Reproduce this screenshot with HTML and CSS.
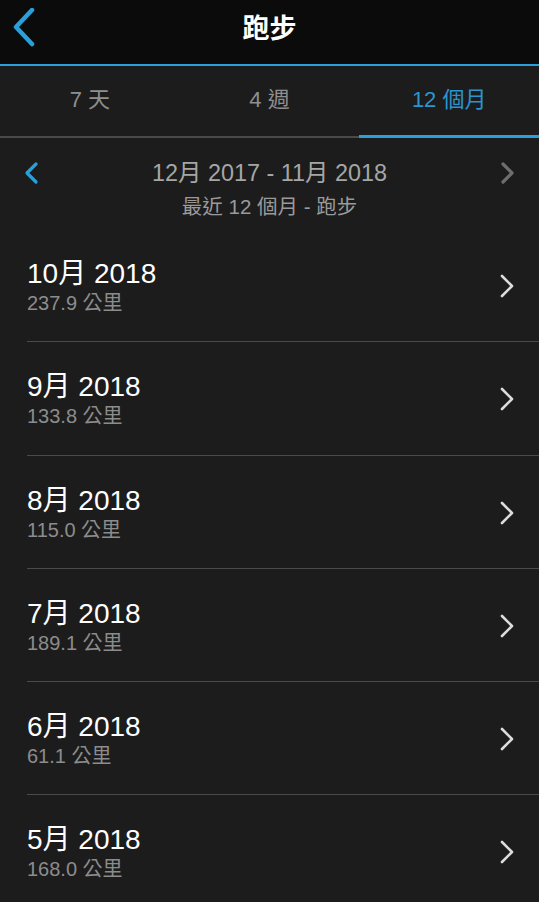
FILE: index.html
```html
<!DOCTYPE html>
<html lang="zh-Hant">
<head>
    <meta charset="UTF-8">
    <meta name="viewport" content="width=device-width, initial-scale=1.0">
    <title>跑步</title>
    <link rel="stylesheet" href="styles.css">
</head>
<body>
    <div class="app">
        <header class="topbar">
            <a class="back" href="#">
                <svg width="24" height="40" viewBox="0 0 24 40"><polyline points="20,2 4,19 20,36" fill="none" stroke="#2a9fd8" stroke-width="4.5" stroke-linecap="round" stroke-linejoin="round"/></svg>
            </a>
            <h1>跑步</h1>
        </header>

        <nav class="tabs">
            <div class="tab">7 天</div>
            <div class="tab">4 週</div>
            <div class="tab active">12 個月</div>
        </nav>

        <section class="range">
            <div class="range-line">
                <span class="arrow">
                    <svg width="16" height="24" viewBox="0 0 16 24"><polyline points="12,3 3,12 12,21" fill="none" stroke="#2a9fd8" stroke-width="3.2" stroke-linecap="round" stroke-linejoin="round"/></svg>
                </span>
                <span class="range-title">12月 2017 - 11月 2018</span>
                <span class="arrow">
                    <svg width="16" height="24" viewBox="0 0 16 24"><polyline points="4,3 13,12 4,21" fill="none" stroke="#6e6e6e" stroke-width="3.2" stroke-linecap="round" stroke-linejoin="round"/></svg>
                </span>
            </div>
            <div class="range-sub">最近 12 個月 - 跑步</div>
        </section>

        <ul class="months">
            <li class="month">
                <div>
                    <div class="month-name">10月 2018</div>
                    <div class="month-dist">237.9 公里</div>
                </div>
                <svg class="chev" width="16" height="24" viewBox="0 0 16 24"><polyline points="4,2 14,12 4,22" fill="none" stroke="#dcdcdc" stroke-width="2.6" stroke-linecap="round" stroke-linejoin="round"/></svg>
            </li>
            <li class="month">
                <div>
                    <div class="month-name">9月 2018</div>
                    <div class="month-dist">133.8 公里</div>
                </div>
                <svg class="chev" width="16" height="24" viewBox="0 0 16 24"><polyline points="4,2 14,12 4,22" fill="none" stroke="#dcdcdc" stroke-width="2.6" stroke-linecap="round" stroke-linejoin="round"/></svg>
            </li>
            <li class="month">
                <div>
                    <div class="month-name">8月 2018</div>
                    <div class="month-dist">115.0 公里</div>
                </div>
                <svg class="chev" width="16" height="24" viewBox="0 0 16 24"><polyline points="4,2 14,12 4,22" fill="none" stroke="#dcdcdc" stroke-width="2.6" stroke-linecap="round" stroke-linejoin="round"/></svg>
            </li>
            <li class="month">
                <div>
                    <div class="month-name">7月 2018</div>
                    <div class="month-dist">189.1 公里</div>
                </div>
                <svg class="chev" width="16" height="24" viewBox="0 0 16 24"><polyline points="4,2 14,12 4,22" fill="none" stroke="#dcdcdc" stroke-width="2.6" stroke-linecap="round" stroke-linejoin="round"/></svg>
            </li>
            <li class="month">
                <div>
                    <div class="month-name">6月 2018</div>
                    <div class="month-dist">61.1 公里</div>
                </div>
                <svg class="chev" width="16" height="24" viewBox="0 0 16 24"><polyline points="4,2 14,12 4,22" fill="none" stroke="#dcdcdc" stroke-width="2.6" stroke-linecap="round" stroke-linejoin="round"/></svg>
            </li>
            <li class="month">
                <div>
                    <div class="month-name">5月 2018</div>
                    <div class="month-dist">168.0 公里</div>
                </div>
                <svg class="chev" width="16" height="24" viewBox="0 0 16 24"><polyline points="4,2 14,12 4,22" fill="none" stroke="#dcdcdc" stroke-width="2.6" stroke-linecap="round" stroke-linejoin="round"/></svg>
            </li>
        </ul>
    </div>
</body>
</html>
```

FILE: styles.css
```css
body {
    margin: 0;
    font-family: "Liberation Sans", "Noto Sans CJK TC", sans-serif;
    background-color: #1c1c1c;
    color: #fff;
    overflow: hidden;
}
.app {
    width: 539px;
    height: 902px;
    overflow: hidden;
}
.topbar {
    height: 64px;
    background-color: #0b0b0b;
    border-bottom: 2px solid #2a9fd8;
    display: flex;
    align-items: center;
    justify-content: center;
    position: relative;
}
.topbar h1 {
    margin: 0;
    font-size: 27px;
    font-weight: bold;
    line-height: 34px;
    margin-top: -6px;
}
.back {
    position: absolute;
    left: 12px;
    top: 8px;
    display: block;
    line-height: 0;
}
.tabs {
    display: flex;
    height: 72px;
    box-shadow: inset 0 -2px 0 #4a4a4a;
}
.tab {
    flex: 1;
    text-align: center;
    font-size: 22px;
    line-height: 30px;
    padding-top: 19px;
    color: #8f8f8f;
}
.tab.active {
    color: #2a95d0;
    box-shadow: inset 0 -3px 0 #2a9fd8;
}
.range {
    padding: 20px 0 9px;
}
.range-line {
    display: flex;
    align-items: center;
    justify-content: space-between;
    padding: 0 24px;
    height: 30px;
}
.arrow {
    line-height: 0;
}
.range-title {
    font-size: 23.4px;
    line-height: 30px;
    color: #a6a6a6;
}
.range-sub {
    text-align: center;
    margin-top: 6px;
    font-size: 20.5px;
    line-height: 26px;
    color: #9a9a9a;
}
.months {
    list-style: none;
    margin: 0;
    padding: 0;
}
.month {
    margin-left: 27px;
    padding: 28px 25px 26.3px 0;
    display: flex;
    align-items: center;
    justify-content: space-between;
    border-bottom: 1px solid #4a4a4a;
}
.month-name {
    font-size: 28px;
    line-height: 34px;
}
.month-dist {
    font-size: 20px;
    line-height: 24px;
    color: #8c8c8c;
}
.chev {
    display: block;
}
```
